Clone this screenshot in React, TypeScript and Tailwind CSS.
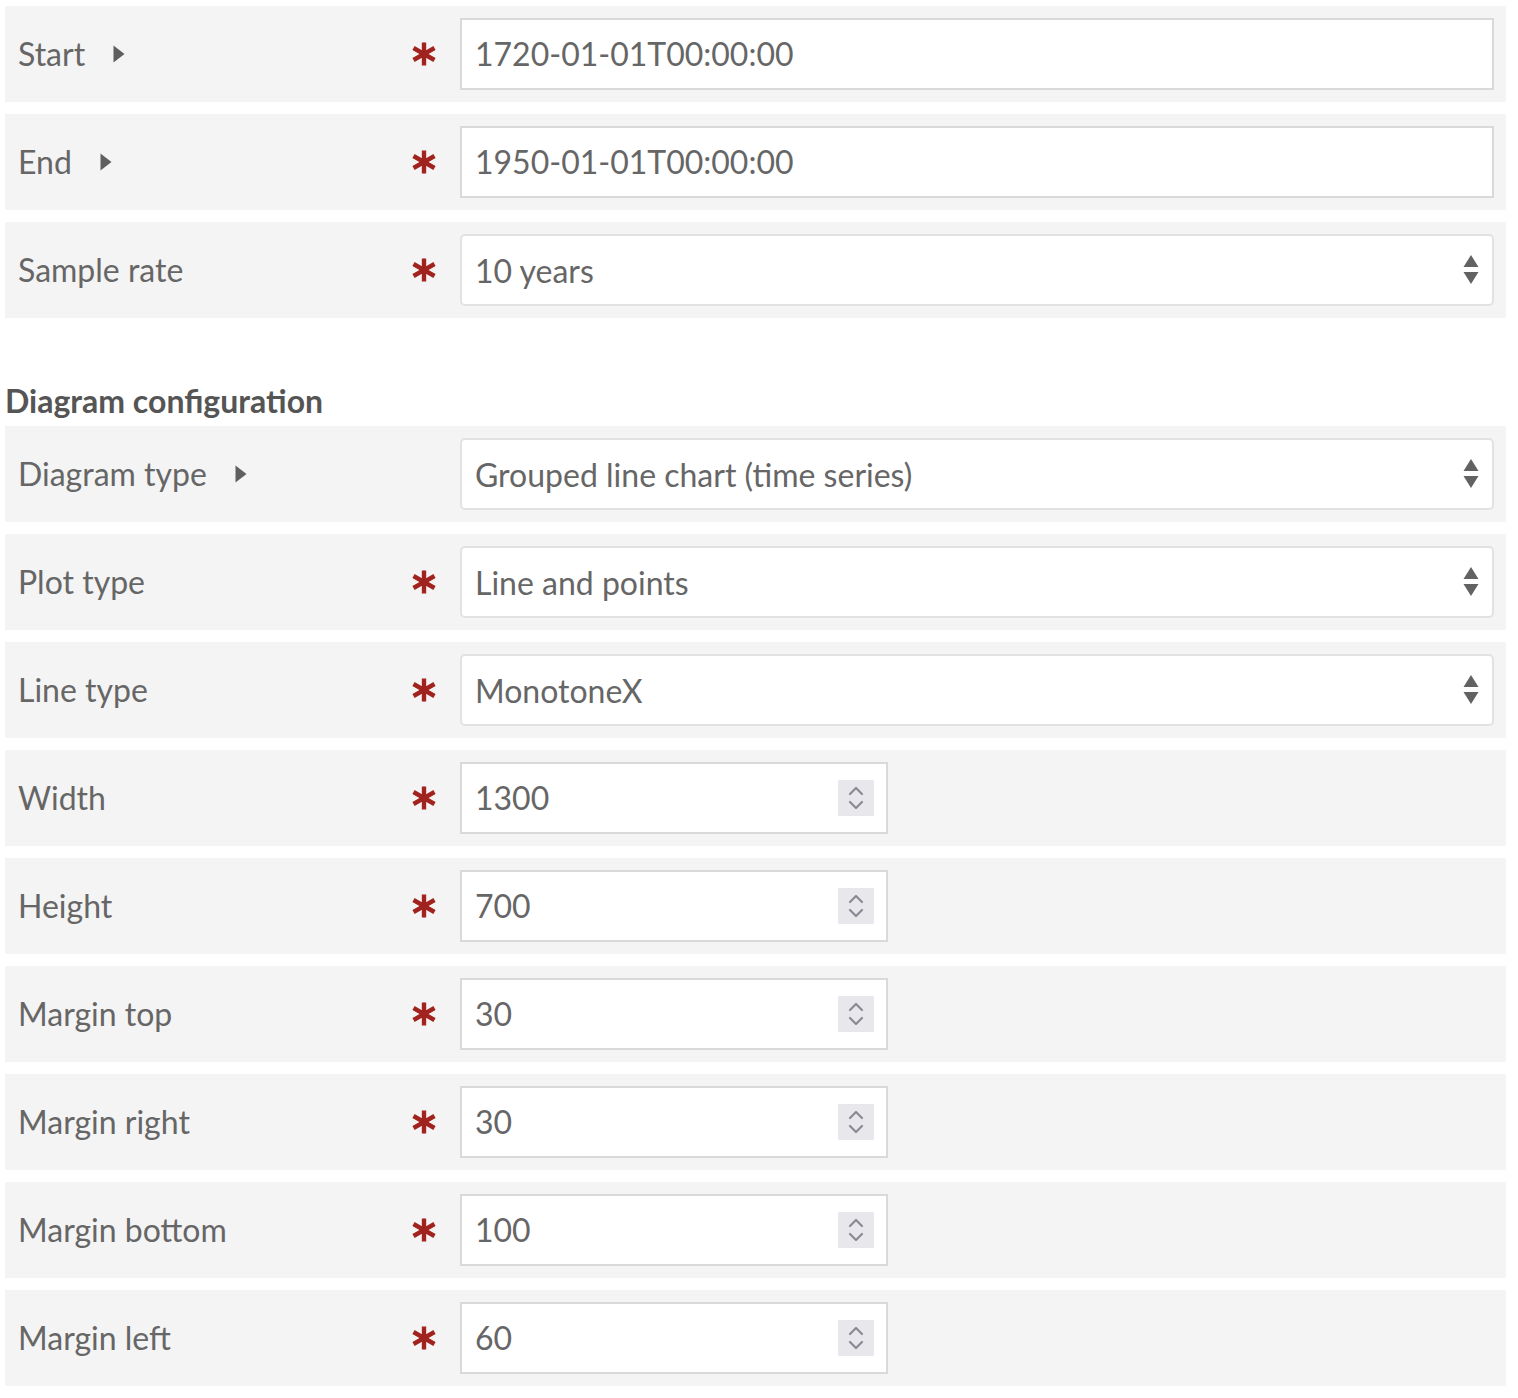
import React from 'react';

type Field = {
  label: string;
  value: string;
  kind: 'text' | 'select' | 'number';
  required?: boolean;
  expandable?: boolean;
};

const timeFields: Field[] = [
  { label: 'Start', value: '1720-01-01T00:00:00', kind: 'text', required: true, expandable: true },
  { label: 'End', value: '1950-01-01T00:00:00', kind: 'text', required: true, expandable: true },
  { label: 'Sample rate', value: '10 years', kind: 'select', required: true },
];

const diagramFields: Field[] = [
  { label: 'Diagram type', value: 'Grouped line chart (time series)', kind: 'select', expandable: true },
  { label: 'Plot type', value: 'Line and points', kind: 'select', required: true },
  { label: 'Line type', value: 'MonotoneX', kind: 'select', required: true },
  { label: 'Width', value: '1300', kind: 'number', required: true },
  { label: 'Height', value: '700', kind: 'number', required: true },
  { label: 'Margin top', value: '30', kind: 'number', required: true },
  { label: 'Margin right', value: '30', kind: 'number', required: true },
  { label: 'Margin bottom', value: '100', kind: 'number', required: true },
  { label: 'Margin left', value: '60', kind: 'number', required: true },
];

const Asterisk = () => (
  <svg width="24" height="24" viewBox="0 0 24 24" className="text-[#a1231f]">
    <g stroke="currentColor" strokeWidth="4.4" strokeLinecap="butt">
      <line x1="12" y1="0.5" x2="12" y2="23.5" />
      <line x1="1.5" y1="6" x2="22.5" y2="18" />
      <line x1="1.5" y1="18" x2="22.5" y2="6" />
    </g>
  </svg>
);

const Caret = () => (
  <svg width="12" height="18" viewBox="0 0 12 18" className="text-[#5f5f5f]">
    <path d="M0.5 0.5 L11.5 9 L0.5 17.5 Z" fill="currentColor" />
  </svg>
);

const SelectArrows = () => (
  <svg width="18" height="36" viewBox="0 0 18 36" className="text-[#626262]">
    <path d="M9 3 L16.5 15 L1.5 15 Z" fill="currentColor" />
    <path d="M1.5 20 L16.5 20 L9 32 Z" fill="currentColor" />
  </svg>
);

const Spinner = () => (
  <div className="flex h-[36px] w-[36px] items-center justify-center bg-[#e8e8ec]">
    <svg width="18" height="28" viewBox="0 0 18 28" className="text-[#8a8a94]">
      <g fill="none" stroke="currentColor" strokeWidth="2.2" strokeLinecap="round" strokeLinejoin="round">
        <path d="M3 10 L9 4 L15 10" />
        <path d="M3 18 L9 24 L15 18" />
      </g>
    </svg>
  </div>
);

function Control({ field }: { field: Field }) {
  if (field.kind === 'select') {
    return (
      <div className="flex h-[72px] flex-1 items-center justify-between rounded-[5px] border-2 border-[#e2e2e2] bg-white pl-[13px] pr-[12px]">
        <span className="pt-[2px]">{field.value}</span>
        <SelectArrows />
      </div>
    );
  }
  if (field.kind === 'number') {
    return (
      <div className="flex h-[72px] w-[428px] items-center justify-between border-2 border-[#d9d9d9] bg-white pl-[13px] pr-[12px]">
        <span>{field.value}</span>
        <Spinner />
      </div>
    );
  }
  return (
    <div className="flex h-[72px] flex-1 items-center border-2 border-[#d9d9d9] bg-white pl-[13px]">
      <span>{field.value}</span>
    </div>
  );
}

function Row({ field }: { field: Field }) {
  return (
    <div className="flex h-[96px] items-center bg-[#f4f4f4] pl-[13px] pr-[12px]">
      <div className="flex w-[394px] items-center gap-[28px]">
        <span>{field.label}</span>
        {field.expandable && <Caret />}
      </div>
      <div className="flex w-[48px] items-center">
        {field.required && <Asterisk />}
      </div>
      <Control field={field} />
    </div>
  );
}

export default function App() {
  return (
    <div
      className="min-h-[1398px] bg-white px-[5px] pt-[6px] text-[32px] leading-none text-[#666]"
      style={{ fontFamily: 'Lato, "Open Sans", sans-serif' }}
    >
      <div className="flex w-[1501px] flex-col gap-[12px]">
        {timeFields.map((f) => (
          <Row key={f.label} field={f} />
        ))}
      </div>
      <h3 className="mt-[66px] mb-[8px] text-[32px] font-bold leading-[34px] text-[#555]">
        Diagram configuration
      </h3>
      <div className="flex w-[1501px] flex-col gap-[12px]">
        {diagramFields.map((f) => (
          <Row key={f.label} field={f} />
        ))}
      </div>
    </div>
  );
}
